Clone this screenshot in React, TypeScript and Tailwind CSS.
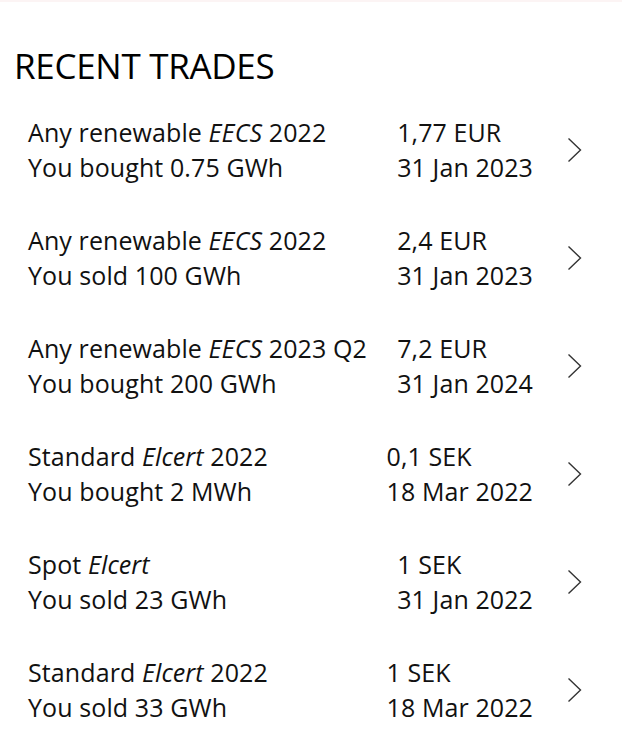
interface Trade {
  product: string;
  scheme: string;
  period: string;
  side: 'bought' | 'sold';
  volume: string;
  price: string;
  date: string;
}

const trades: Trade[] = [
  { product: 'Any renewable', scheme: 'EECS', period: '2022', side: 'bought', volume: '0.75 GWh', price: '1,77 EUR', date: '31 Jan 2023' },
  { product: 'Any renewable', scheme: 'EECS', period: '2022', side: 'sold', volume: '100 GWh', price: '2,4 EUR', date: '31 Jan 2023' },
  { product: 'Any renewable', scheme: 'EECS', period: '2023 Q2', side: 'bought', volume: '200 GWh', price: '7,2 EUR', date: '31 Jan 2024' },
  { product: 'Standard', scheme: 'Elcert', period: '2022', side: 'bought', volume: '2 MWh', price: '0,1 SEK', date: '18 Mar 2022' },
  { product: 'Spot', scheme: 'Elcert', period: '', side: 'sold', volume: '23 GWh', price: '1 SEK', date: '31 Jan 2022' },
  { product: 'Standard', scheme: 'Elcert', period: '2022', side: 'sold', volume: '33 GWh', price: '1 SEK', date: '18 Mar 2022' },
];

function Chevron() {
  return (
    <svg width="15" height="26" viewBox="0 0 15 26" fill="none" className="text-[#333]">
      <polyline points="1.5,1.5 13.5,13 1.5,24.5" stroke="currentColor" strokeWidth="1.4" />
    </svg>
  );
}

export default function App() {
  return (
    <div
      className="min-h-screen bg-white border-t-2 border-[#fcf4f4] text-[#111]"
      style={{ fontFamily: '"Open Sans", "Noto Sans", sans-serif' }}
    >
      {/* Header */}
      <h1 className="pl-[14px] pt-[42px] text-[35px] leading-[44px] tracking-[-0.3px] font-normal text-black">
        RECENT TRADES
      </h1>

      {/* Trade list */}
      <ul className="mt-[27px] flex flex-col gap-[38px]">
        {trades.map((t, i) => (
          <li key={i} className="flex items-center pl-[28px] pr-[40px] cursor-pointer">
            <div className="flex-1 text-[25px] leading-[35px] tracking-[0.1px]">
              <div>
                {t.product} <em>{t.scheme}</em>{t.period && ` ${t.period}`}
              </div>
              <div>
                You {t.side} {t.volume}
              </div>
            </div>
            <div className="text-[25px] leading-[35px] tracking-[0.1px]">
              <div>{t.price}</div>
              <div>{t.date}</div>
            </div>
            <div className="ml-[34px] flex">
              <Chevron />
            </div>
          </li>
        ))}
      </ul>
    </div>
  );
}
